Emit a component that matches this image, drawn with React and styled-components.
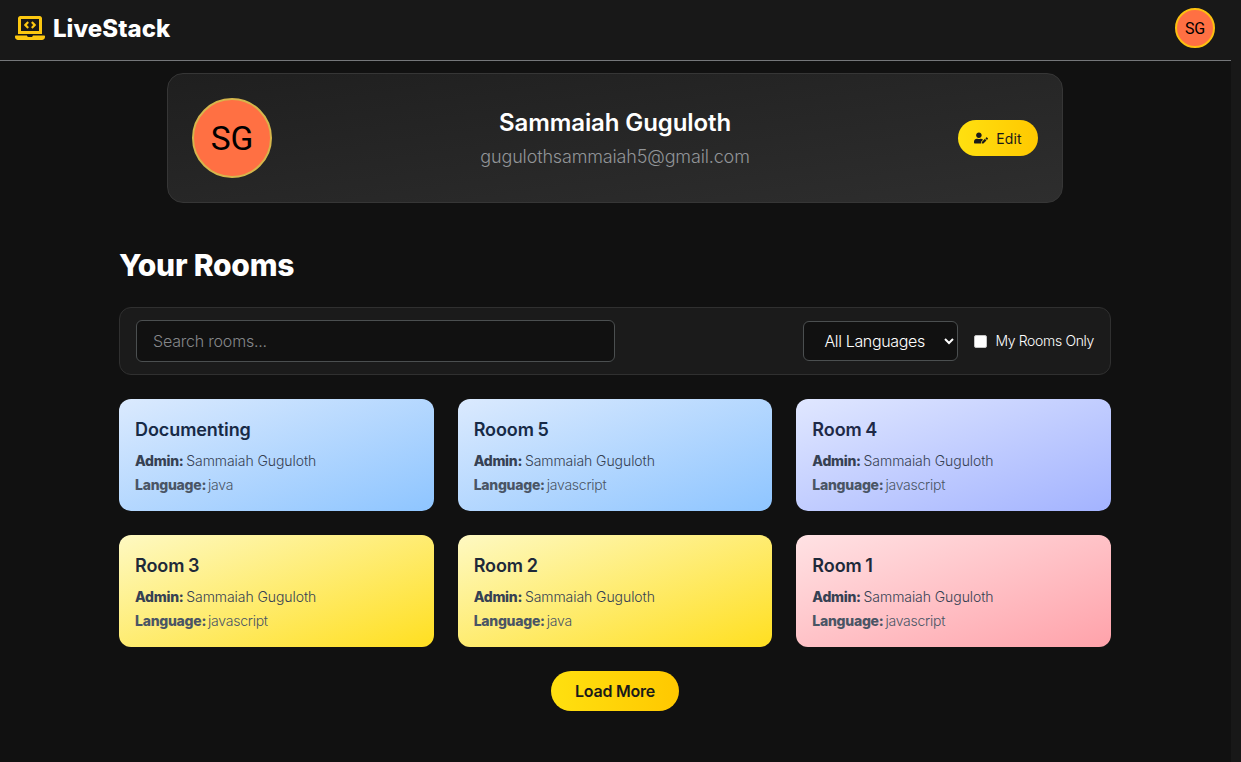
import React from 'react';
import styled, { createGlobalStyle } from 'styled-components';
import { FaLaptopCode, FaUserEdit } from 'react-icons/fa';

const GlobalStyle = createGlobalStyle`
  *, *::before, *::after { box-sizing: border-box; }
  body {
    margin: 0;
    background: #111111;
    color: #ffffff;
    font-family: Inter, "Liberation Sans", sans-serif;
    font-weight: 300;
  }
  h1, h2, h3, p { margin: 0; }
  input, select, button { font: inherit; color: inherit; }
`;

const Shell = styled.div`
  display: flex;
  height: 762px;
  overflow: hidden;
`;

const Page = styled.div`
  flex: 1;
  min-width: 0;
`;

const ScrollTrack = styled.div`
  width: 10px;
  background: #181818;
`;

const Header = styled.header`
  display: flex;
  justify-content: space-between;
  align-items: flex-start;
  height: 61px;
  padding: 8px 16px 0 15px;
  background: #181818;
  border-bottom: 1px solid #75777a;
`;

const Brand = styled.div`
  display: flex;
  align-items: center;
  gap: 8px;
  height: 40px;
  font-size: 24px;
  font-weight: 800;
  letter-spacing: 0.05px;
  svg { color: #fcc810; width: 30px; height: 24px; }
`;

const Avatar = styled.div`
  display: flex;
  align-items: center;
  justify-content: center;
  flex: none;
  width: ${(p) => p.$size}px;
  height: ${(p) => p.$size}px;
  border: ${(p) => (p.$size > 50 ? '2px solid #d6b64c' : '2px solid #fcc010')};
  border-radius: 50%;
  background: #ff7043;
  color: #000000;
  font-family: Roboto, sans-serif;
  font-weight: 400;
  font-size: ${(p) => p.$text}px;
  letter-spacing: -0.2px;
`;

const Body = styled.div`
  padding: 12px 1px 0 0;
`;

const ProfileCard = styled.section`
  display: flex;
  align-items: center;
  justify-content: space-between;
  width: 896px;
  height: 130px;
  margin: 0 auto;
  padding: 0 24px;
  border: 1px solid #363636;
  border-radius: 16px;
  background: linear-gradient(to bottom right, #1f1f1f, #2e2e2e);
`;

const Identity = styled.div`
  display: flex;
  flex: 1;
  flex-direction: column;
  align-items: center;
  gap: 4px;
  padding-top: 2px;
`;

const Name = styled.h2`
  font-size: 24px;
  line-height: 32px;
  font-weight: 600;
  letter-spacing: -0.1px;
`;

const Email = styled.p`
  font-size: 18px;
  line-height: 28px;
  color: #929598;
  letter-spacing: -0.15px;
`;

const PillButton = styled.button`
  display: flex;
  align-items: center;
  justify-content: center;
  gap: 8px;
  width: ${(p) => p.$width}px;
  height: ${(p) => p.$height}px;
  padding: 0;
  border: 0;
  border-radius: 999px;
  background: linear-gradient(to right, #ffe010, #ffc800);
  color: #1a1a1a;
  font-size: ${(p) => p.$text}px;
  font-weight: ${(p) => p.$weight};
  letter-spacing: ${(p) => p.$tracking || 0}px;
`;

const Content = styled.main`
  width: 992px;
  margin: 42px auto 0;
`;

const Title = styled.h1`
  font-size: 30px;
  line-height: 40px;
  font-weight: 800;
  letter-spacing: -0.2px;
`;

const FilterBar = styled.div`
  display: flex;
  align-items: center;
  gap: 16px;
  height: 68px;
  margin-top: 22px;
  padding: 0 16px;
  border: 1px solid #303030;
  border-radius: 12px;
  background: #1b1b1b;
`;

const Search = styled.input`
  width: 479px;
  height: 42px;
  margin-right: auto;
  padding: 0 16px;
  border: 1px solid #4b4f50;
  border-radius: 6px;
  background: #111111;
  font-size: 16px;
  letter-spacing: -0.2px;
  outline: none;
  &::placeholder { color: #85878a; opacity: 1; }
`;

const Languages = styled.select`
  width: 155px;
  height: 40px;
  padding: 0 0 0 16px;
  border: 1px solid #4b4f50;
  border-radius: 6px;
  background: #111111;
  font-size: 16px;
  letter-spacing: -0.35px;
`;

const OnlyMine = styled.label`
  display: flex;
  align-items: center;
  gap: 8px;
  font-size: 14px;
  line-height: 20px;
  letter-spacing: -0.34px;
  white-space: nowrap;
  span { margin-top: -1px; }
`;

const Checkbox = styled.input`
  appearance: none;
  width: 13px;
  height: 13px;
  margin: 0;
  border: 1px solid #c4c4c4;
  border-radius: 2px;
  background: #ffffff;
`;

const Grid = styled.div`
  display: grid;
  grid-template-columns: repeat(3, 1fr);
  gap: 24px;
  margin: 24px 0;
`;

const tones = {
  blue: ['#dbeafe', '#8ec5ff', '#172a46'],
  indigo: ['#e0e7ff', '#a3b3ff', '#1e2947'],
  yellow: ['#fef9c2', '#ffdf20', '#1e2939'],
  red: ['#ffe2e4', '#ffa2aa', '#1e2939'],
};

const Card = styled.article`
  height: 112px;
  padding: 17px 16px 0;
  border-radius: 12px;
  background: linear-gradient(to bottom right, ${(p) => tones[p.$tone][0]}, ${(p) => tones[p.$tone][1]});
  color: ${(p) => tones[p.$tone][2]};
`;

const RoomName = styled.h3`
  margin-bottom: 7px;
  font-size: 18px;
  line-height: 28px;
  font-weight: 600;
  letter-spacing: -0.08px;
  word-spacing: -0.8px;
`;

const Detail = styled.p`
  display: flex;
  gap: ${(p) => (p.$soft ? 2 : 2.8)}px;
  font-size: 14px;
  line-height: 20px;
  margin-bottom: 4px;
  color: ${(p) => (p.$soft ? '#4a5565' : '#364153')};
  letter-spacing: ${(p) => (p.$soft ? -0.25 : -0.07)}px;
  strong { font-weight: 800; letter-spacing: -0.26px; }
`;

const More = styled.div`
  display: flex;
  justify-content: center;
`;

const rooms = [
  ['Documenting', 'java', 'blue'],
  ['Rooom 5', 'javascript', 'blue'],
  ['Room 4', 'javascript', 'indigo'],
  ['Room 3', 'javascript', 'yellow'],
  ['Room 2', 'java', 'yellow'],
  ['Room 1', 'javascript', 'red'],
];

export default function App() {
  return (
    <Shell>
      <GlobalStyle />
      <Page>
        <Header>
          <Brand><FaLaptopCode /><span>LiveStack</span></Brand>
          <Avatar $size={40} $text={16}>SG</Avatar>
        </Header>
        <Body>
          <ProfileCard>
            <Avatar $size={80} $text={33.5}>SG</Avatar>
            <Identity>
              <Name>Sammaiah Guguloth</Name>
              <Email>gugulothsammaiah5@gmail.com</Email>
            </Identity>
            <PillButton $width={80} $height={36} $text={14} $weight={400} $tracking={0.1}>
              <FaUserEdit size={14} /><span>Edit</span>
            </PillButton>
          </ProfileCard>
          <Content>
            <Title>Your Rooms</Title>
            <FilterBar>
              <Search placeholder="Search rooms..." />
              <Languages><option>All Languages</option></Languages>
              <OnlyMine><Checkbox type="checkbox" /><span>My Rooms Only</span></OnlyMine>
            </FilterBar>
            <Grid>
              {rooms.map(([name, language, tone]) => (
                <Card key={name} $tone={tone}>
                  <RoomName>{name}</RoomName>
                  <Detail><strong>Admin:</strong><span>Sammaiah Guguloth</span></Detail>
                  <Detail $soft><strong>Language:</strong><span>{language}</span></Detail>
                </Card>
              ))}
            </Grid>
            <More>
              <PillButton $width={128} $height={40} $text={16} $weight={600} $tracking={-0.25}>Load More</PillButton>
            </More>
          </Content>
        </Body>
      </Page>
      <ScrollTrack />
    </Shell>
  );
}
